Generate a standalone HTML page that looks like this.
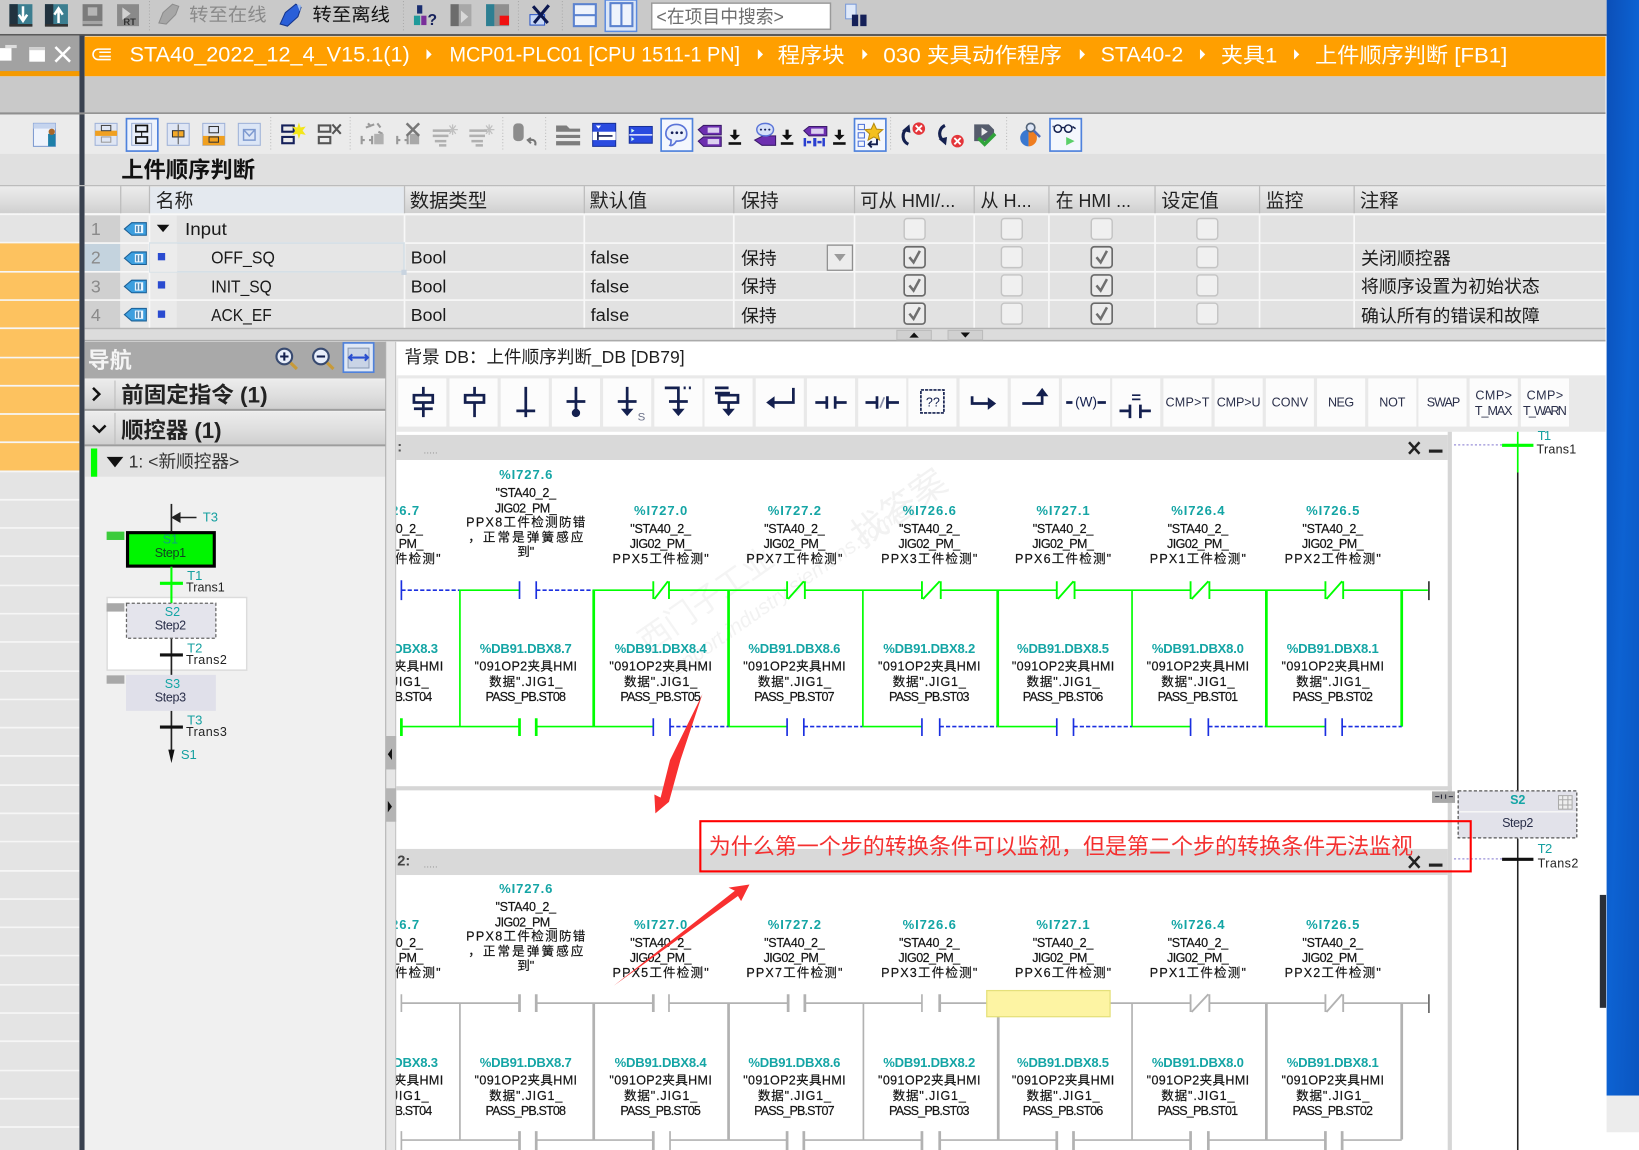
<!DOCTYPE html>
<html lang="zh"><head><meta charset="utf-8"><title>STA40</title>
<style>
html,body{margin:0;padding:0;background:#fff;width:1639px;height:1150px;overflow:hidden}
svg{display:block;filter:blur(.35px)}
text{font-family:"Liberation Sans","Noto Sans CJK SC",sans-serif;fill:#1a1a1a}
.o{fill:#fff;font-size:20px}
.h{font-size:18px;fill:#222}
.t{font-size:17.5px;fill:#222}
.a{font-size:12.5px;font-weight:bold;fill:#14a5a5;text-anchor:middle}
.b{font-size:12px;fill:#151515;text-anchor:middle;stroke:#151515;stroke-width:.2}
.q{font-size:12.5px;fill:#16a0a0}
.s{font-size:12px;fill:#222}
.m{font-size:12px;fill:#2a2f4a;text-anchor:middle}
.i path,.i line{fill:none;stroke:#14204f;stroke-width:2.6}
.i path.f{fill:#14204f;stroke:none}
.n line{stroke:#0f0;stroke-width:1.6}
.n .k{stroke-width:2.6}
.d{stroke:#1a2fe0!important;stroke-dasharray:4 2;stroke-width:1.6}
.u{stroke:#1a2fe0!important}
.g line{stroke:#b2b2b2;stroke-width:1.6}
.g .k{stroke-width:2.6}
</style></head><body>
<svg width="1639" height="1150" viewBox="0 0 1568 1100" preserveAspectRatio="none" xmlns="http://www.w3.org/2000/svg">
<defs>
<linearGradient id="hd" x1="0" y1="0" x2="0" y2="1"><stop offset="0" stop-color="#ececec"/><stop offset=".55" stop-color="#dedede"/><stop offset="1" stop-color="#cfcfcf"/></linearGradient>
<linearGradient id="bl" x1="0" y1="0" x2="1" y2="1"><stop offset="0" stop-color="#0b4fb8"/><stop offset=".5" stop-color="#0d62d2"/><stop offset="1" stop-color="#0a55c0"/></linearGradient>
<clipPath id="c1"><rect x="379" y="413" width="1006" height="687"/></clipPath>
<symbol id="cb" width="22" height="22" viewBox="0 0 22 22"><rect x="1" y="1" width="20" height="20" rx="3" fill="#f0f0f0" stroke="#c4c4c4" stroke-width="1.4"/></symbol>
<symbol id="cc" width="22" height="22" viewBox="0 0 22 22"><rect x="1" y="1" width="20" height="20" rx="3" fill="#ececec" stroke="#6a6a6a" stroke-width="1.6"/><path d="M6 11l4 5 6-11" fill="none" stroke="#6f6f6f" stroke-width="2.4"/></symbol>
<symbol id="tg" width="24" height="16" viewBox="0 0 24 16"><path d="M1 8L8 2h14v12H8z" fill="#3d9fdf" stroke="#1b5f95"/><rect x="11" y="4" width="8" height="8" fill="#eaf6ff"/><path d="M13 5v6M16 5v6" stroke="#1b5f95" stroke-width="1.2"/></symbol>
</defs>

<!-- base -->
<rect width="1568" height="1100" fill="#fff"/>
<rect x="1537" width="31" height="1048" fill="url(#bl)"/>
<rect x="1537" y="1048" width="31" height="35" fill="#ececec"/>

<!-- top toolbar -->
<rect width="1537" height="33" fill="#c9c9c9"/>
<rect y="32.5" width="1537" height="2" fill="#5b5b5b"/>
<rect x="9" y="4" width="22" height="21" fill="#3c7e90"/><rect x="9" y="4" width="8" height="21" fill="#22333f"/><path d="M22 6v12M18 14l4 6 4-6" stroke="#fff" stroke-width="2.4" fill="none"/><rect x="9" y="23" width="22" height="2.5" fill="#333"/>
<rect x="43" y="4" width="22" height="21" fill="#3c7e90"/><rect x="43" y="4" width="8" height="21" fill="#22333f"/><path d="M56 22V10M52 14l4-6 4 6" stroke="#fff" stroke-width="2.4" fill="none"/><rect x="43" y="23" width="22" height="2.5" fill="#333"/>
<rect x="79" y="4" width="19" height="21" fill="#7b7b7b"/><rect x="84" y="7" width="9" height="8" fill="#b5b5b5"/><rect x="79" y="20" width="19" height="3" fill="#a5a5a5"/>
<rect x="112" y="4" width="21" height="21" fill="#8a8a8a"/><path d="M117 7l8 6-8 6z" fill="#d0d0d0"/><text x="118" y="24" style="font-size:9px;font-weight:bold;fill:#333">RT</text>
<path d="M152 22l4-10 9-8 6 2-3 8-9 9z" fill="#a6a6a6" stroke="#8c8c8c"/>
<text class="t" x="181" y="20" textLength="74" lengthAdjust="spacingAndGlyphs" style="fill:#8a8a8a">转至在线</text>
<path d="M268 23l5-11 10-8 5 3-3 9-10 9z" fill="#2a5fd8" stroke="#14358c"/><path d="M284 4l4 1-1 6" fill="#9dbdf0"/>
<text class="t" x="299" y="20" textLength="74" lengthAdjust="spacingAndGlyphs" style="fill:#111">转至离线</text>
<rect x="396" y="15" width="6" height="9" fill="#1f9a9a"/><rect x="403" y="15" width="5" height="9" fill="#7a2f9a"/><rect x="399" y="5" width="5" height="8" fill="#1a2e70"/><text x="409" y="24" style="font-size:15px;font-weight:bold;fill:#15205a">?</text>
<rect x="431" y="4" width="8" height="21" fill="#6c6c6c"/><rect x="439" y="4" width="12" height="21" fill="#a8a8a8"/><path d="M441 10l7 6-7 6z" fill="#d8d8d8"/>
<rect x="465" y="4" width="8" height="21" fill="#2d7f92"/><rect x="473" y="4" width="14" height="21" fill="#8f8f8f"/><rect x="478" y="15" width="9" height="9" fill="#f01010"/>
<rect x="507" y="14" width="14" height="10" fill="#c8d8f5" stroke="#2a55c8"/><path d="M510 6l14 16M525 5l-14 17" stroke="#0c1850" stroke-width="3"/>
<rect x="549" y="4" width="21" height="21" fill="#eef3fc" stroke="#5b82cf" stroke-width="2"/><rect x="549" y="13.500" width="21" height="2" fill="#5b82cf"/>
<rect x="579" y="0" width="30" height="30" fill="#dce6f6" stroke="#5a8ae0" stroke-width="1.4"/><rect x="584" y="3" width="21" height="22" fill="#eef3fc" stroke="#5b82cf" stroke-width="2"/><rect x="593.500" y="3" width="2" height="22" fill="#5b82cf"/>
<line x1="143" y1="1" x2="143" y2="31" stroke="#aaa" stroke-dasharray="1 2"/><line x1="386" y1="1" x2="386" y2="31" stroke="#aaa" stroke-dasharray="1 2"/><line x1="496" y1="1" x2="496" y2="31" stroke="#aaa" stroke-dasharray="1 2"/><line x1="538" y1="1" x2="538" y2="31" stroke="#aaa" stroke-dasharray="1 2"/>
<rect x="623.500" y="3" width="171" height="25" fill="#fff" stroke="#9a9a9a" stroke-width="1.4"/>
<text class="t" x="628" y="22" textLength="122" lengthAdjust="spacingAndGlyphs" style="fill:#6e6e6e">&lt;在项目中搜索&gt;</text>
<rect x="809" y="4" width="10" height="14" fill="#dfe9fa" stroke="#7a9ad8"/><rect x="815" y="14" width="6" height="11" fill="#152058"/><rect x="823" y="14" width="6" height="11" fill="#152058"/>

<!-- left column -->
<rect y="34" width="76" height="35" fill="#a2a2a2"/>
<rect y="68" width="76" height="5" fill="#f59a00"/>
<rect y="73" width="76" height="36" fill="#c9c9c9"/>
<rect y="109" width="76" height="38" fill="#ebebeb"/>
<rect y="147" width="76" height="31" fill="#e0e0e0"/>
<rect y="178" width="76" height="26" fill="url(#hd)"/>
<rect y="204" width="76" height="896" fill="#e4e4e4"/>
<rect y="232" width="76" height="218" fill="#fdc25f"/>
<g stroke="#f6f6f6" stroke-width="1.6"><line x2="76" y1="205" y2="205"/><line x2="76" y1="232" y2="232"/><line x2="76" y1="260" y2="260"/><line x2="76" y1="287" y2="287"/><line x2="76" y1="314" y2="314"/><line x2="76" y1="342" y2="342"/><line x2="76" y1="369" y2="369"/><line x2="76" y1="396" y2="396"/><line x2="76" y1="423" y2="423"/><line x2="76" y1="451" y2="451"/><line x2="76" y1="478" y2="478"/><line x2="76" y1="505" y2="505"/><line x2="76" y1="532" y2="532"/><line x2="76" y1="560" y2="560"/><line x2="76" y1="587" y2="587"/><line x2="76" y1="614" y2="614"/><line x2="76" y1="642" y2="642"/><line x2="76" y1="669" y2="669"/><line x2="76" y1="696" y2="696"/><line x2="76" y1="723" y2="723"/><line x2="76" y1="751" y2="751"/><line x2="76" y1="778" y2="778"/><line x2="76" y1="805" y2="805"/><line x2="76" y1="833" y2="833"/><line x2="76" y1="860" y2="860"/><line x2="76" y1="887" y2="887"/><line x2="76" y1="914" y2="914"/><line x2="76" y1="942" y2="942"/><line x2="76" y1="969" y2="969"/><line x2="76" y1="996" y2="996"/><line x2="76" y1="1024" y2="1024"/><line x2="76" y1="1051" y2="1051"/><line x2="76" y1="1078" y2="1078"/></g>
<rect x="0" y="46" width="11" height="12" fill="#fff"/><rect x="5" y="43" width="11" height="3" fill="#ddd"/>
<rect x="28" y="45" width="15" height="14" fill="#fff"/><rect x="28" y="45" width="15" height="3" fill="#cfcfcf"/>
<path d="M53 45l14 14M67 45L53 59" stroke="#fff" stroke-width="2.4"/>
<rect x="32" y="118" width="21" height="22" fill="#eef3fc" stroke="#7d9ad0"/><rect x="32" y="118" width="21" height="5" fill="#c5d4ee"/><rect x="46" y="128" width="7" height="12" fill="#1d7fa8"/><circle cx="49.500" cy="126" r="3" fill="#a8672a"/>
<rect x="76" y="34" width="5" height="1066" fill="#39414f"/>

<!-- orange breadcrumb -->
<rect x="81" y="35" width="1455" height="38" fill="#ff9f00"/>
<path d="M106 47H94a4 4 0 000 10h12M106 50H95M106 54H95" fill="none" stroke="#fff" stroke-width="1.5"/>
<text class="o" x="124" y="59" textLength="268" lengthAdjust="spacingAndGlyphs">STA40_2022_12_4_V15.1(1)</text>
<path d="M408 47l5 5-5 5z" fill="#fff"/>
<text class="o" x="430" y="59" textLength="278" lengthAdjust="spacingAndGlyphs">MCP01-PLC01 [CPU 1511-1 PN]</text>
<path d="M725 47l5 5-5 5z" fill="#fff"/>
<text class="o" x="744" y="60" textLength="64" lengthAdjust="spacingAndGlyphs">程序块</text>
<path d="M825 47l5 5-5 5z" fill="#fff"/>
<text class="o" x="845" y="60" textLength="171" lengthAdjust="spacingAndGlyphs">030 夹具动作程序</text>
<path d="M1033 47l5 5-5 5z" fill="#fff"/>
<text class="o" x="1053" y="59" textLength="79" lengthAdjust="spacingAndGlyphs">STA40-2</text>
<path d="M1148 47l5 5-5 5z" fill="#fff"/>
<text class="o" x="1168" y="60" textLength="54" lengthAdjust="spacingAndGlyphs">夹具1</text>
<path d="M1238 47l5 5-5 5z" fill="#fff"/>
<text class="o" x="1258" y="60" textLength="184" lengthAdjust="spacingAndGlyphs">上件顺序判断 [FB1]</text>

<!-- grey band and editor toolbar -->
<rect x="81" y="73" width="1455" height="35" fill="#c9c9c9"/>
<rect x="0" y="107.500" width="1536" height="2" fill="#8f8f8f"/>
<rect x="81" y="109" width="1455" height="38" fill="#ebebeb"/>
<rect x="81" y="147" width="1455" height="31" fill="#e0e0e0"/>

<rect x="91" y="118" width="21" height="21" fill="#dfe6f4" stroke="#9fb2d8"/><rect x="91" y="125" width="21" height="5" fill="#f0a020"/><rect x="97" y="120" width="9" height="5" fill="none" stroke="#444"/><rect x="97" y="131" width="9" height="5" fill="none" stroke="#999"/>
<rect x="121" y="113.500" width="30" height="31" fill="#eef3fc" stroke="#4f82dc" stroke-width="1.6"/><rect x="126" y="118" width="19" height="21" fill="#e8eef9" stroke="#9fb2d8"/><rect x="130" y="120" width="11" height="6" fill="none" stroke="#111" stroke-width="1.6"/><rect x="130" y="131" width="11" height="6" fill="none" stroke="#111" stroke-width="1.6"/><line x1="135.500" y1="126" x2="135.500" y2="131" stroke="#111"/>
<rect x="160" y="118" width="21" height="21" fill="#dfe6f4" stroke="#9fb2d8"/><rect x="165" y="125" width="11" height="6" fill="#f4a928" stroke="#333"/><line x1="170.500" y1="119" x2="170.500" y2="138" stroke="#555"/>
<rect x="194" y="118" width="21" height="21" fill="#dfe6f4" stroke="#9fb2d8"/><rect x="194" y="130" width="21" height="9" fill="#f0a020"/><rect x="200" y="121" width="9" height="6" fill="none" stroke="#333"/><rect x="200" y="131" width="9" height="5" fill="none" stroke="#333"/>
<rect x="228" y="118" width="21" height="21" fill="#dce6f6" stroke="#9fb2d8"/><path d="M233 124h11v10h-11zM233 124l5.500 6 5.500-6" fill="none" stroke="#7e9ad0" stroke-width="1.4"/>
<line x1="259" y1="112" x2="259" y2="145" stroke="#bdbdbd" stroke-dasharray="1 2"/>
<rect x="270" y="120" width="11" height="6" fill="none" stroke="#15205a" stroke-width="2"/><rect x="270" y="131" width="11" height="6" fill="none" stroke="#15205a" stroke-width="2"/><path d="M286 117l1.500 5 5-1-3 4 3 4-5-1-1.500 5-1.500-5-5 1 3-4-3-4 5 1z" fill="#f3e61a"/>
<rect x="305" y="120" width="11" height="6" fill="none" stroke="#555" stroke-width="2"/><rect x="305" y="131" width="11" height="6" fill="none" stroke="#555" stroke-width="2"/><path d="M318 119l8 9M326 119l-8 9" stroke="#555" stroke-width="2"/>
<line x1="335" y1="112" x2="335" y2="145" stroke="#bdbdbd" stroke-dasharray="1 2"/>
<path d="M346 130v8M356 130v8M346 134h3M353 134h3M350 122l8-3M361 118l3 4M366 128l-4-2M352 118l3 3" stroke="#999" stroke-width="2" fill="none"/><rect x="358" y="128" width="9" height="10" fill="#b0b0b0"/>
<path d="M380 130v8M390 130v8M380 134h3M387 134h3" stroke="#999" stroke-width="2" fill="none"/><rect x="392" y="128" width="9" height="10" fill="#a8a8a8"/><path d="M389 118l12 12M401 118l-12 12" stroke="#777" stroke-width="2.4"/>
<path d="M414 125h17M414 130h15M416 135h11M420 139h7" stroke="#b0b0b0" stroke-width="2.4"/><path d="M433 119v10M428 124h10M430 120l6 8M436 120l-6 8" stroke="#c0c0c0" stroke-width="1.2"/>
<path d="M449 125h17M449 130h15M451 135h11M455 139h7" stroke="#b0b0b0" stroke-width="2.4"/><path d="M468 119v10M463 124h10M465 120l6 8M471 120l-6 8" stroke="#c0c0c0" stroke-width="1.2"/>
<line x1="481" y1="112" x2="481" y2="145" stroke="#bdbdbd" stroke-dasharray="1 2"/>
<rect x="491" y="118" width="10" height="17" rx="4" fill="#8c8c8c"/><path d="M512 139c1-4-1-6-6-5m2-2l-3 2 3 3" fill="none" stroke="#777" stroke-width="2"/>
<line x1="522" y1="112" x2="522" y2="145" stroke="#bdbdbd" stroke-dasharray="1 2"/>
<path d="M532 120h10l3 3h10v3h-23zM532 129h23v3h-23zM532 135h23v4h-23z" fill="#7d7d7d"/>
<rect x="567" y="118" width="22" height="22" fill="#2a4be0" stroke="#173099"/><path d="M570 120h5l-2.500 3z" fill="#fff"/><rect x="567" y="126" width="22" height="8" fill="#fff"/><path d="M572 126v8M572 130h14" stroke="#15205a" stroke-width="1.6"/>
<rect x="602" y="121" width="22" height="16" fill="#2a4be0" stroke="#173099"/><line x1="602" y1="129" x2="624" y2="129" stroke="#eef" stroke-width="1.4"/><path d="M604 123l3 2-3 2zM604 131l3 2-3 2z" fill="#cfe"/>
<rect x="632.500" y="113.500" width="30" height="31" fill="#f4f7fd" stroke="#4f82dc" stroke-width="1.6"/><path d="M637 128c0-6 5-9 10-9s10 3 10 9-5 7-10 7c-1 2-4 5-6 4 1-1 1-3 1-5-3-1-5-3-5-6z" fill="#eaf0fb" stroke="#5a74d8" stroke-width="1.6"/><circle cx="643" cy="127" r="1.300" fill="#15205a"/><circle cx="647.500" cy="127" r="1.300" fill="#15205a"/><circle cx="652" cy="127" r="1.300" fill="#15205a"/>
<path d="M668 124l5-4h17v9h-17zM668 135l5-4h17v9h-17z" fill="#6d2fb0" stroke="#3b1a6a"/><rect x="677" y="122" width="11" height="5" fill="#dcd0f0"/><rect x="677" y="133" width="11" height="5" fill="#dcd0f0"/>
<path d="M703 124v6" stroke="#111" stroke-width="3"/><path d="M698 129h10l-5 5z" fill="#111"/><rect x="697" y="136" width="12" height="2.500" fill="#111"/>
<path d="M722 134l8-4h12v9h-13z" fill="#6d2fb0" stroke="#3b1a6a"/><path d="M724 124c0-4 4-6 8-6s8 2 8 6-4 6-8 6-8-2-8-6z" fill="#d6e0f8" stroke="#5a74d8" stroke-width="1.4"/><circle cx="728" cy="124" r="1" fill="#15205a"/><circle cx="732" cy="124" r="1" fill="#15205a"/><circle cx="736" cy="124" r="1" fill="#15205a"/>
<path d="M753 124v6" stroke="#111" stroke-width="3"/><path d="M748 129h10l-5 5z" fill="#111"/><rect x="747" y="136" width="12" height="2.500" fill="#111"/>
<path d="M769 125l5-4h17v9h-17z" fill="#6d2fb0" stroke="#3b1a6a"/><rect x="776" y="123" width="12" height="5" fill="#dcd0f0"/><path d="M770 132v8M788 132v8M772 136h4M782 136h4" stroke="#2a3fd0" stroke-width="2.400"/><rect x="778" y="132" width="3" height="8" fill="#2a3fd0"/>
<path d="M803 124v6" stroke="#111" stroke-width="3"/><path d="M798 129h10l-5 5z" fill="#111"/><rect x="797" y="136" width="12" height="2.500" fill="#111"/>
<rect x="817.500" y="113.500" width="30" height="31" fill="#f4f7fd" stroke="#4f82dc" stroke-width="1.6"/><path d="M821 119h6v5h-6zM821 127h6v5h-6zM821 135h6v5h-6z" fill="none" stroke="#4a6fd8"/><path d="M836 118l2.500 5.500 6 .5-4.500 4 1.500 6-5.500-3-5.500 3 1.500-6-4.500-4 6-.5z" fill="#f4c020" stroke="#b58a10"/><path d="M839 133v5h-7m2-3l-3 3 3 3" fill="none" stroke="#14204f" stroke-width="1.8"/>
<line x1="852" y1="112" x2="852" y2="145" stroke="#bdbdbd" stroke-dasharray="1 2"/>
<path d="M869 138c-6-3-7-11-1-15" fill="none" stroke="#14204f" stroke-width="3"/><path d="M863 125l7-6 1 8z" fill="#14204f"/><circle cx="879" cy="123" r="6" fill="#e4353a"/><path d="M876 120l6 6M882 120l-6 6" stroke="#fff" stroke-width="1.8"/>
<path d="M904 120c-6 3-7 11-1 15" fill="none" stroke="#14204f" stroke-width="3"/><path d="M898 133l7 6 1-8z" fill="#14204f"/><circle cx="916" cy="135" r="6" fill="#e4353a"/><path d="M913 132l6 6M919 132l-6 6" stroke="#fff" stroke-width="1.8"/>
<path d="M932 119h14l5 5v6l-6 5h-13z" fill="#555c6c"/><path d="M939 122l6 4-6 4z" fill="#eee"/><path d="M936 132l6 6 10-10" fill="none" stroke="#2fa33a" stroke-width="3.4"/>
<line x1="963" y1="112" x2="963" y2="145" stroke="#bdbdbd" stroke-dasharray="1 2"/>
<path d="M984 124a8 8 0 000 16z" fill="#3a78d0"/><path d="M984 124a8 8 0 010 16z" fill="#ef7d20"/><circle cx="986" cy="122" r="4" fill="#dfe8f8" stroke="#55657a" stroke-width="1.6"/><path d="M989 125l6 6" stroke="#4f6bb8" stroke-width="2.400"/>
<rect x="1004.500" y="113.500" width="30" height="31" fill="#f4f7fd" stroke="#4f82dc" stroke-width="1.6"/><circle cx="1012" cy="123" r="3.500" fill="none" stroke="#14204f" stroke-width="1.4"/><circle cx="1022" cy="123" r="3.500" fill="none" stroke="#14204f" stroke-width="1.4"/><path d="M1015 122h4M1008 121h-1M1026 121l3 2" fill="none" stroke="#14204f" stroke-width="1.400"/><path d="M1020 131l8 4-8 4z" fill="#5bd06a"/>

<!-- title -->
<text x="116" y="170" textLength="128" lengthAdjust="spacingAndGlyphs" style="font-size:21px;font-weight:bold;fill:#111">上件顺序判断</text>

<!-- table -->
<rect x="81" y="178" width="1455" height="26" fill="url(#hd)"/>
<rect x="143" y="179" width="244" height="25" fill="#e4e9ef"/>
<rect x="81" y="204" width="1455" height="2" fill="#f8f8f8"/>
<rect x="81" y="206" width="1455" height="108" fill="#e2e2e2"/>
<rect x="143" y="206" width="26" height="108" fill="#eaeaea"/>
<rect x="81" y="206" width="34" height="108" fill="#d0d0d0"/>
<rect x="81" y="233" width="34" height="27" fill="#c4d3de"/>
<rect x="115" y="206" width="28" height="108" fill="#e8e8e8"/>
<g stroke="#f8f8f8" stroke-width="1.6"><line x1="81" x2="1536" y1="232.500" y2="232.500"/><line x1="81" x2="1536" y1="260" y2="260"/><line x1="81" x2="1536" y1="287" y2="287"/><line x1="143" x2="143" y1="206" y2="314"/><line x1="387" x2="387" y1="206" y2="314"/><line x1="559" x2="559" y1="206" y2="314"/><line x1="702" x2="702" y1="206" y2="314"/><line x1="817.500" x2="817.500" y1="206" y2="314"/><line x1="932" x2="932" y1="206" y2="314"/><line x1="1003.500" x2="1003.500" y1="206" y2="314"/><line x1="1105" x2="1105" y1="206" y2="314"/><line x1="1205" x2="1205" y1="206" y2="314"/><line x1="1295.500" x2="1295.500" y1="206" y2="314"/></g>
<g stroke="#bcbcbc" stroke-width="1.2"><line x1="115.500" x2="115.500" y1="178" y2="204"/><line x1="143" x2="143" y1="178" y2="204"/><line x1="387" x2="387" y1="178" y2="204"/><line x1="559" x2="559" y1="178" y2="204"/><line x1="702" x2="702" y1="178" y2="204"/><line x1="817.500" x2="817.500" y1="178" y2="204"/><line x1="932" x2="932" y1="178" y2="204"/><line x1="1003.500" x2="1003.500" y1="178" y2="204"/><line x1="1105" x2="1105" y1="178" y2="204"/><line x1="1205" x2="1205" y1="178" y2="204"/><line x1="1295.500" x2="1295.500" y1="178" y2="204"/><line x1="0" x2="1536" y1="177.500" y2="177.500"/></g>
<rect x="143.500" y="232.500" width="243" height="27.500" fill="#e6e6e6" stroke="#d5dfe6" stroke-width="1.6"/><rect x="143.500" y="233" width="26" height="27" fill="#ececec"/><rect x="384" y="258" width="5" height="5" fill="#c9d4e0"/>

<text class="h" x="149" y="198" textLength="36" lengthAdjust="spacingAndGlyphs">名称</text>
<text class="h" x="392" y="198" textLength="74" lengthAdjust="spacingAndGlyphs">数据类型</text>
<text class="h" x="564" y="198" textLength="55" lengthAdjust="spacingAndGlyphs">默认值</text>
<text class="h" x="709" y="198" textLength="36" lengthAdjust="spacingAndGlyphs">保持</text>
<text class="h" x="823" y="198" textLength="91" lengthAdjust="spacingAndGlyphs">可从 HMI/...</text>
<text class="h" x="938" y="198" textLength="49" lengthAdjust="spacingAndGlyphs">从 H...</text>
<text class="h" x="1010" y="198" textLength="72" lengthAdjust="spacingAndGlyphs">在 HMI ...</text>
<text class="h" x="1111" y="198" textLength="55" lengthAdjust="spacingAndGlyphs">设定值</text>
<text class="h" x="1211" y="198" textLength="36" lengthAdjust="spacingAndGlyphs">监控</text>
<text class="h" x="1301" y="198" textLength="37" lengthAdjust="spacingAndGlyphs">注释</text>

<g style="font-size:17px">
<text x="87" y="225" style="font-size:17px;fill:#8a8a8a">1</text>
<text x="87" y="252" style="font-size:17px;fill:#8a8a8a">2</text>
<text x="87" y="280" style="font-size:17px;fill:#8a8a8a">3</text>
<text x="87" y="307" style="font-size:17px;fill:#8a8a8a">4</text>
<text x="177" y="225" textLength="40" lengthAdjust="spacingAndGlyphs" style="font-size:17px">Input</text>
<text x="202" y="252" textLength="61" lengthAdjust="spacingAndGlyphs" style="font-size:17px">OFF_SQ</text>
<text x="202" y="280" textLength="58" lengthAdjust="spacingAndGlyphs" style="font-size:17px">INIT_SQ</text>
<text x="202" y="307" textLength="58" lengthAdjust="spacingAndGlyphs" style="font-size:17px">ACK_EF</text>
<text x="393" y="252" textLength="34" lengthAdjust="spacingAndGlyphs" style="font-size:17px">Bool</text>
<text x="393" y="280" textLength="34" lengthAdjust="spacingAndGlyphs" style="font-size:17px">Bool</text>
<text x="393" y="307" textLength="34" lengthAdjust="spacingAndGlyphs" style="font-size:17px">Bool</text>
<text x="565" y="252" textLength="37" lengthAdjust="spacingAndGlyphs" style="font-size:17px">false</text>
<text x="565" y="280" textLength="37" lengthAdjust="spacingAndGlyphs" style="font-size:17px">false</text>
<text x="565" y="307" textLength="37" lengthAdjust="spacingAndGlyphs" style="font-size:17px">false</text>
<text x="709" y="253" textLength="34" lengthAdjust="spacingAndGlyphs" style="font-size:17px">保持</text>
<text x="709" y="280" textLength="34" lengthAdjust="spacingAndGlyphs" style="font-size:17px">保持</text>
<text x="709" y="308" textLength="34" lengthAdjust="spacingAndGlyphs" style="font-size:17px">保持</text>
<text x="1302" y="253" textLength="86" lengthAdjust="spacingAndGlyphs" style="font-size:17px">关闭顺控器</text>
<text x="1302" y="280" textLength="171" lengthAdjust="spacingAndGlyphs" style="font-size:17px">将顺序设置为初始状态</text>
<text x="1302" y="308" textLength="171" lengthAdjust="spacingAndGlyphs" style="font-size:17px">确认所有的错误和故障</text>
</g>
<use href="#tg" x="118" y="211"/><use href="#tg" x="118" y="239"/><use href="#tg" x="118" y="266"/><use href="#tg" x="118" y="293"/>
<path d="M150 215h12l-6 7z" fill="#111"/>
<rect x="151" y="242" width="7" height="7" fill="#2a4bd0"/><rect x="151" y="269" width="7" height="7" fill="#2a4bd0"/><rect x="151" y="297" width="7" height="7" fill="#2a4bd0"/>
<rect x="791.500" y="234.500" width="24" height="24" fill="#ececec" stroke="#8f8f8f" stroke-width="1.2"/><path d="M798 243h11l-5.500 7z" fill="#9a9a9a"/>
<use href="#cb" x="864" y="208"/><use href="#cb" x="957" y="208"/><use href="#cb" x="1043" y="208"/><use href="#cb" x="1144" y="208"/>
<use href="#cc" x="864" y="235"/><use href="#cb" x="957" y="235"/><use href="#cc" x="1043" y="235"/><use href="#cb" x="1144" y="235"/>
<use href="#cc" x="864" y="262"/><use href="#cb" x="957" y="262"/><use href="#cc" x="1043" y="262"/><use href="#cb" x="1144" y="262"/>
<use href="#cc" x="864" y="289"/><use href="#cb" x="957" y="289"/><use href="#cc" x="1043" y="289"/><use href="#cb" x="1144" y="289"/>
<rect x="81" y="314" width="1455" height="11" fill="#dcdcdc"/><rect x="81" y="313.500" width="1455" height="1.400" fill="#b5b5b5"/><rect x="81" y="325" width="1455" height="1.600" fill="#aaa"/>
<rect x="858" y="316" width="33" height="9" fill="#d0d0d0" stroke="#bbb"/><rect x="907" y="316" width="33" height="9" fill="#d0d0d0" stroke="#bbb"/>
<path d="M870 323l4.500-5 4.500 5z" fill="#111"/><path d="M919 318l4.500 5 4.500-5z" fill="#111"/>

<!-- navigation panel -->
<rect x="81" y="327" width="288" height="773" fill="#f0f0f0"/>
<rect x="81" y="327" width="288" height="35" fill="#a9a9a9"/>
<text x="84" y="352" textLength="42" lengthAdjust="spacingAndGlyphs" style="font-size:21px;fill:#f4f4f4;font-weight:bold">导航</text>
<circle cx="272" cy="341" r="7.500" fill="#e8eefa" stroke="#384a70" stroke-width="2"/><path d="M268 341h8M272 337v8" stroke="#14204f" stroke-width="2"/><path d="M278 347l6 6" stroke="#c79a3a" stroke-width="3"/>
<circle cx="307" cy="341" r="7.500" fill="#e8eefa" stroke="#384a70" stroke-width="2"/><path d="M303 341h8" stroke="#14204f" stroke-width="2"/><path d="M313 347l6 6" stroke="#c79a3a" stroke-width="3"/>
<rect x="328.500" y="328" width="29" height="28" fill="#dfe8f6" stroke="#4f82dc" stroke-width="1.6"/><rect x="333" y="333" width="20" height="19" fill="#c9d4e6" stroke="#8a9ab5"/><path d="M334 342h18M337 339l-3 3 3 3M349 339l3 3-3 3" fill="none" stroke="#2a4fd0" stroke-width="2"/>
<rect x="81" y="363" width="288" height="28" fill="url(#hd)"/><rect x="81" y="391" width="288" height="2" fill="#9d9d9d"/>
<rect x="81" y="394" width="288" height="31" fill="url(#hd)"/><rect x="81" y="425" width="288" height="2" fill="#9d9d9d"/>
<line x1="110" y1="364" x2="110" y2="391" stroke="#bbb"/><line x1="110" y1="395" x2="110" y2="425" stroke="#bbb"/>
<path d="M89 371l6 6-6 6" fill="none" stroke="#111" stroke-width="2.400"/>
<path d="M89 407l6 6 6-6" fill="none" stroke="#111" stroke-width="2.400"/>
<text x="116" y="385" textLength="140" lengthAdjust="spacingAndGlyphs" style="font-size:21px;font-weight:bold;fill:#222">前固定指令 (1)</text>
<text x="116" y="419" textLength="96" lengthAdjust="spacingAndGlyphs" style="font-size:21px;font-weight:bold;fill:#222">顺控器 (1)</text>
<rect x="81" y="427" width="288" height="29" fill="#e2e2e2"/>
<rect x="87" y="429" width="6" height="27" fill="#0f0"/>
<path d="M102 437h16l-8 10z" fill="#111"/>
<text x="123" y="447" textLength="106" lengthAdjust="spacingAndGlyphs" style="font-size:17px;fill:#333">1: &lt;新顺控器&gt;</text>

<!-- SFC in nav -->
<rect x="102.500" y="571.500" width="133.500" height="69.500" fill="#fff" stroke="#dcdcdc" stroke-width="1.4"/>
<line x1="164" y1="482" x2="164" y2="508" stroke="#222" stroke-width="1.6"/>
<path d="M188 495h-18M172 491l-7 4 7 4z" fill="#222" stroke="#222" stroke-width="1.4"/>
<text class="q" x="194" y="499">T3</text>
<rect x="122" y="509.500" width="83" height="32" fill="#00f500" stroke="#000" stroke-width="3"/>
<rect x="102" y="508.500" width="17" height="8" fill="#3ccb3c"/>
<text class="m" x="163" y="520" style="fill:#0da47a">S1</text><text class="m" x="163" y="533" textLength="30" style="fill:#142">Step1</text>
<line x1="164" y1="542" x2="164" y2="577" stroke="#0f0" stroke-width="2"/>
<line x1="153" y1="558" x2="175" y2="558" stroke="#0f0" stroke-width="3"/>
<text class="q" x="179" y="555">T1</text><text class="s" x="178" y="566" textLength="37">Trans1</text>
<rect x="121" y="577" width="85.500" height="33.500" fill="#e4e4ec" stroke="#666" stroke-width="1.2" stroke-dasharray="3 2"/>
<rect x="102" y="577" width="17" height="8" fill="#a8a8a8"/>
<text class="m" x="165" y="589" style="fill:#14a5a5">S2</text><text class="m" x="163" y="602" textLength="30">Step2</text>
<line x1="164" y1="611" x2="164" y2="646" stroke="#222" stroke-width="1.6"/>
<line x1="153" y1="626.500" x2="175" y2="626.500" stroke="#111" stroke-width="3"/>
<text class="q" x="179" y="624">T2</text><text class="s" x="178" y="635" textLength="39">Trans2</text>
<rect x="120.500" y="645.500" width="86" height="34.500" fill="#e0e0ea"/>
<rect x="102" y="646" width="17" height="8" fill="#a8a8a8"/>
<text class="m" x="165" y="658" style="fill:#14a5a5">S3</text><text class="m" x="163" y="671" textLength="30">Step3</text>
<line x1="164" y1="680" x2="164" y2="722" stroke="#222" stroke-width="1.6"/>
<line x1="153" y1="695.500" x2="175" y2="695.500" stroke="#111" stroke-width="3"/>
<text class="q" x="179" y="693">T3</text><text class="s" x="178" y="704" textLength="39">Trans3</text>
<path d="M161 717h6l-3 13z" fill="#111"/>
<text class="q" x="173" y="726">S1</text>

<!-- splitter -->
<rect x="369" y="327" width="10" height="773" fill="#e6e6e6"/>
<line x1="369" x2="369" y1="327" y2="1100" stroke="#b0b0b0"/><line x1="378.500" x2="378.500" y1="327" y2="1100" stroke="#c4c4c4"/>
<rect x="369" y="704" width="10" height="32" fill="#b4b4b4"/><rect x="369" y="754" width="10" height="32" fill="#b4b4b4"/>
<path d="M375 716v11l-4-5.500z" fill="#111"/><path d="M371 766v11l4-5.500z" fill="#111"/>

<!-- editor -->
<text x="387" y="347" textLength="268" lengthAdjust="spacingAndGlyphs" style="font-size:17px;fill:#1f1f1f">背景 DB：上件顺序判断_DB [DB79]</text>
<rect x="379" y="359" width="1157" height="54" fill="#e9e9e9"/>
<g fill="#fcfcfc">
<rect x="381" y="362" width="46" height="46"/><rect x="430" y="362" width="46" height="46"/><rect x="479" y="362" width="46" height="46"/><rect x="528" y="362" width="46" height="46"/><rect x="577" y="362" width="46" height="46"/><rect x="626" y="362" width="46" height="46"/><rect x="674" y="362" width="46" height="46"/><rect x="723" y="362" width="46" height="46"/><rect x="772" y="362" width="46" height="46"/><rect x="821" y="362" width="46" height="46"/><rect x="869" y="362" width="46" height="46"/><rect x="918" y="362" width="46" height="46"/><rect x="967" y="362" width="46" height="46"/><rect x="1016" y="362" width="46" height="46"/><rect x="1064" y="362" width="46" height="46"/><rect x="1113" y="362" width="46" height="46"/><rect x="1162" y="362" width="46" height="46"/><rect x="1211" y="362" width="46" height="46"/><rect x="1260" y="362" width="46" height="46"/><rect x="1309" y="362" width="46" height="46"/><rect x="1357" y="362" width="46" height="46"/><rect x="1406" y="362" width="46" height="46"/><rect x="1455" y="362" width="46" height="46"/>
</g>
<g class="i">
<path d="M405 370v8M396 378h18v7h-18zM396 391h18M405 385v14"/>
<path d="M454 370v8M445 378h18v7h-18zM454 385v14"/>
<path d="M503 370v29M494 393h18"/>
<path d="M551 370v26M542 384h18"/><circle cx="551" cy="395" r="4" fill="#14204f"/>
<path d="M600 370v24M591 384h18"/><path class="f" d="M594 391h12l-6 7z"/>
<path d="M636 371h13v23M640 384h18"/><path class="f" d="M643 391h12l-6 7z"/><path d="M654 371h2M659 371h2"/>
<path d="M684 371h13M684 376h13v2M688 378h18v7h-18zM697 385v8"/><path class="f" d="M691 391h12l-6 7z"/>
<path d="M759 371v14h-20"/><path class="f" d="M741 379l-8 6 8 6z"/>
<path d="M780 385h11M791 379v12M799 379v12M799 385h11"/>
<path d="M828 385h11M839 379v12M849 379v12M849 385h11"/><path d="M842 390l4-10" style="stroke:#8a8fa8;stroke-width:1.6"/>
<path d="M881 373h22v22h-22z" style="stroke-width:1.6;stroke-dasharray:3 1"/>
<path d="M930 379v7h17"/><path class="f" d="M945 380l8 6-8 6z"/>
<path d="M978 386h19v-9"/><path class="f" d="M991 379l6-8 6 8z"/>
<path d="M1020 385h6M1050 385h8"/>
<path d="M1071 393h10M1081 387v13M1091 387v13M1091 393h10"/><path d="M1083 378h8M1083 382h8" style="stroke-width:1.600"/>
</g>
<text x="892.500" y="389" text-anchor="middle" style="font-size:12px;fill:#14204f">??</text>
<text x="1039" y="389" text-anchor="middle" style="font-size:13px;fill:#14204f">(W)</text>
<text x="610" y="402" style="font-size:11px;fill:#6a7088">S</text>
<text class="m" x="1136" y="389" textLength="42">CMP&gt;T</text>
<text class="m" x="1185" y="389" textLength="42">CMP&gt;U</text>
<text class="m" x="1234" y="389" textLength="35">CONV</text>
<text class="m" x="1283" y="389" textLength="25">NEG</text>
<text class="m" x="1332" y="389" textLength="25">NOT</text>
<text class="m" x="1381" y="389" textLength="32">SWAP</text>
<text class="m" x="1429" y="382" textLength="35">CMP&gt;</text><text class="m" x="1429" y="397" textLength="36">T_MAX</text>
<text class="m" x="1478" y="382" textLength="35">CMP&gt;</text><text class="m" x="1478" y="397" textLength="42">T_WARN</text>

<!-- network frames -->
<rect x="379" y="416" width="1006" height="24" fill="#d9d9d9"/>
<rect x="379" y="812" width="1006" height="25" fill="#d9d9d9"/>
<rect x="379" y="752" width="1010" height="4" fill="#d6d6d6"/>
<rect x="1385" y="413" width="4" height="687" fill="#d6d6d6"/>
<text x="380" y="432" style="font-size:14px;fill:#555;font-weight:bold">:</text>
<text x="380" y="828" style="font-size:14px;fill:#444;font-weight:bold">2:</text>
<text x="405" y="434" style="font-size:10px;fill:#999">.....</text>
<text x="405" y="830" style="font-size:10px;fill:#999">.....</text>
<path d="M1348 423l10 11M1358 423l-10 11" stroke="#222" stroke-width="2.400"/><rect x="1367" y="430" width="13" height="3" fill="#222"/>
<path d="M1348 819l10 11M1358 819l-10 11" stroke="#222" stroke-width="2.400"/><rect x="1367" y="826" width="13" height="3" fill="#222"/>

<!-- watermark -->
<g style="opacity:.45">
<text transform="translate(620 625) rotate(-35)" style="font-size:30px;fill:#e8e8e8">西门子工业</text>
<text transform="translate(640 652) rotate(-35)" style="font-size:20px;font-style:italic;fill:#e4e4e4">support.industry.siemens.com/cs</text>
<text transform="translate(825 525) rotate(-35)" style="font-size:34px;fill:#e4e4e4">找答案</text>
</g>

<g clip-path="url(#c1)">
<!-- network 1 ladder -->
<g class="n">
<line class="u" x1="384" x2="384" y1="555" y2="574"/><line class="d" x1="384" x2="440" y1="564.500" y2="564.500"/>
<line x1="440" x2="497" y1="564.500" y2="564.500"/><line class="u" x1="497" x2="497" y1="556" y2="573"/><line class="u" x1="513" x2="513" y1="556" y2="573"/><line class="d" x1="513" x2="568" y1="564.500" y2="564.500"/>
<line x1="568" x2="625" y1="564.500" y2="564.500"/><line x1="640" x2="753" y1="564.500" y2="564.500"/><line x1="770" x2="882" y1="564.500" y2="564.500"/><line x1="900" x2="1011" y1="564.500" y2="564.500"/><line x1="1028" x2="1139" y1="564.500" y2="564.500"/><line x1="1157" x2="1268" y1="564.500" y2="564.500"/><line x1="1285" x2="1366" y1="564.500" y2="564.500"/>
<path d="M625 556v17M640 556v17M626 573l13-17M753 556v17M770 556v17M754 573l15-17M882 556v17M900 556v17M883 573l16-17M1011 556v17M1028 556v17M1012 573l15-17M1139 556v17M1157 556v17M1140 573l16-17M1268 556v17M1285 556v17M1269 573l15-17" fill="none" stroke="#0f0" stroke-width="1.800"/>
<line x1="1367" x2="1367" y1="556" y2="574" style="stroke:#333"/>
<line x1="440" x2="440" y1="564" y2="695"/><line class="k" x1="568" x2="568" y1="564" y2="695"/><line class="k" x1="697" x2="697" y1="564" y2="695"/><line x1="825.500" x2="825.500" y1="564" y2="695"/><line class="k" x1="954.500" x2="954.500" y1="564" y2="695"/><line x1="1083" x2="1083" y1="564" y2="695"/><line class="k" x1="1211.500" x2="1211.500" y1="564" y2="695"/><line class="k" x1="1341" x2="1341" y1="564" y2="695"/>
<line class="k" x1="384" x2="384" y1="687" y2="704"/><line x1="384" x2="497" y1="695" y2="695"/><line class="k" x1="497" x2="497" y1="687" y2="704"/><line class="k" x1="513" x2="513" y1="687" y2="704"/><line x1="513" x2="625" y1="695" y2="695"/>
<line class="u" x1="625" x2="625" y1="687" y2="704"/><line class="u" x1="641" x2="641" y1="687" y2="704"/><line class="d" x1="641" x2="697" y1="695" y2="695"/><line x1="697" x2="753" y1="695" y2="695"/>
<line class="u" x1="753" x2="753" y1="687" y2="704"/><line class="u" x1="769" x2="769" y1="687" y2="704"/><line class="d" x1="769" x2="825" y1="695" y2="695"/><line x1="825" x2="882" y1="695" y2="695"/>
<line class="u" x1="882" x2="882" y1="687" y2="704"/><line class="u" x1="899" x2="899" y1="687" y2="704"/><line class="d" x1="899" x2="954" y1="695" y2="695"/><line x1="954" x2="1011" y1="695" y2="695"/>
<line class="u" x1="1011" x2="1011" y1="687" y2="704"/><line class="u" x1="1027" x2="1027" y1="687" y2="704"/><line class="d" x1="1027" x2="1083" y1="695" y2="695"/><line x1="1083" x2="1139" y1="695" y2="695"/>
<line class="u" x1="1139" x2="1139" y1="687" y2="704"/><line class="u" x1="1156" x2="1156" y1="687" y2="704"/><line class="d" x1="1156" x2="1211" y1="695" y2="695"/><line x1="1211" x2="1268" y1="695" y2="695"/>
<line class="u" x1="1268" x2="1268" y1="687" y2="704"/><line class="u" x1="1284" x2="1284" y1="687" y2="704"/><line class="d" x1="1284" x2="1341" y1="695" y2="695"/>
</g>
<!-- network 1 labels -->
<text class="a" x="375.500" y="492.500" textLength="51">%I726.7</text><text class="b" x="375.500" y="510" textLength="58">"STA40_2_</text><text class="b" x="375.500" y="524" textLength="59">JIG02_PM_</text><text class="b" x="375.500" y="538.500" textLength="92">PPX4工件检测"</text>
<text class="a" x="503" y="458" textLength="51">%I727.6</text><text class="b" x="503" y="475.500" textLength="58">"STA40_2_</text><text class="b" x="503" y="490" textLength="59">JIG02_PM_</text><text class="b" x="503" y="503.500" textLength="114">PPX8工件检测防错</text><text class="b" x="503" y="518" textLength="110">，正常是弹簧感应</text><text class="b" x="503" y="532">到"</text>
<text class="a" x="632" y="492.500" textLength="51">%I727.0</text><text class="b" x="632" y="510" textLength="58">"STA40_2_</text><text class="b" x="632" y="524" textLength="59">JIG02_PM_</text><text class="b" x="632" y="538.500" textLength="92">PPX5工件检测"</text>
<text class="a" x="760" y="492.500" textLength="51">%I727.2</text><text class="b" x="760" y="510" textLength="58">"STA40_2_</text><text class="b" x="760" y="524" textLength="59">JIG02_PM_</text><text class="b" x="760" y="538.500" textLength="92">PPX7工件检测"</text>
<text class="a" x="889" y="492.500" textLength="51">%I726.6</text><text class="b" x="889" y="510" textLength="58">"STA40_2_</text><text class="b" x="889" y="524" textLength="59">JIG02_PM_</text><text class="b" x="889" y="538.500" textLength="92">PPX3工件检测"</text>
<text class="a" x="1017" y="492.500" textLength="51">%I727.1</text><text class="b" x="1017" y="510" textLength="58">"STA40_2_</text><text class="b" x="1017" y="524" textLength="59">JIG02_PM_</text><text class="b" x="1017" y="538.500" textLength="92">PPX6工件检测"</text>
<text class="a" x="1146" y="492.500" textLength="51">%I726.4</text><text class="b" x="1146" y="510" textLength="58">"STA40_2_</text><text class="b" x="1146" y="524" textLength="59">JIG02_PM_</text><text class="b" x="1146" y="538.500" textLength="92">PPX1工件检测"</text>
<text class="a" x="1275" y="492.500" textLength="51">%I726.5</text><text class="b" x="1275" y="510" textLength="58">"STA40_2_</text><text class="b" x="1275" y="524" textLength="59">JIG02_PM_</text><text class="b" x="1275" y="538.500" textLength="92">PPX2工件检测"</text>

<text class="a" x="375" y="624.500" textLength="88">%DB91.DBX8.3</text><text class="b" x="375" y="641.500" textLength="98">"091OP2夹具HMI</text><text class="b" x="375" y="656" textLength="70">数据".JIG1_</text><text class="b" x="375" y="670.500" textLength="77">PASS_PB.ST04</text>
<text class="a" x="503" y="624.500" textLength="88">%DB91.DBX8.7</text><text class="b" x="503" y="641.500" textLength="98">"091OP2夹具HMI</text><text class="b" x="503" y="656" textLength="70">数据".JIG1_</text><text class="b" x="503" y="670.500" textLength="77">PASS_PB.ST08</text>
<text class="a" x="632" y="624.500" textLength="88">%DB91.DBX8.4</text><text class="b" x="632" y="641.500" textLength="98">"091OP2夹具HMI</text><text class="b" x="632" y="656" textLength="70">数据".JIG1_</text><text class="b" x="632" y="670.500" textLength="77">PASS_PB.ST05</text>
<text class="a" x="760" y="624.500" textLength="88">%DB91.DBX8.6</text><text class="b" x="760" y="641.500" textLength="98">"091OP2夹具HMI</text><text class="b" x="760" y="656" textLength="70">数据".JIG1_</text><text class="b" x="760" y="670.500" textLength="77">PASS_PB.ST07</text>
<text class="a" x="889" y="624.500" textLength="88">%DB91.DBX8.2</text><text class="b" x="889" y="641.500" textLength="98">"091OP2夹具HMI</text><text class="b" x="889" y="656" textLength="70">数据".JIG1_</text><text class="b" x="889" y="670.500" textLength="77">PASS_PB.ST03</text>
<text class="a" x="1017" y="624.500" textLength="88">%DB91.DBX8.5</text><text class="b" x="1017" y="641.500" textLength="98">"091OP2夹具HMI</text><text class="b" x="1017" y="656" textLength="70">数据".JIG1_</text><text class="b" x="1017" y="670.500" textLength="77">PASS_PB.ST06</text>
<text class="a" x="1146" y="624.500" textLength="88">%DB91.DBX8.0</text><text class="b" x="1146" y="641.500" textLength="98">"091OP2夹具HMI</text><text class="b" x="1146" y="656" textLength="70">数据".JIG1_</text><text class="b" x="1146" y="670.500" textLength="77">PASS_PB.ST01</text>
<text class="a" x="1275" y="624.500" textLength="88">%DB91.DBX8.1</text><text class="b" x="1275" y="641.500" textLength="98">"091OP2夹具HMI</text><text class="b" x="1275" y="656" textLength="70">数据".JIG1_</text><text class="b" x="1275" y="670.500" textLength="77">PASS_PB.ST02</text>

<!-- network 2 ladder -->
<g class="g">
<line x1="384" x2="384" y1="951" y2="968"/><line x1="384" x2="497" y1="959.500" y2="959.500"/><line class="k" x1="497" x2="497" y1="951" y2="968"/><line class="k" x1="513" x2="513" y1="951" y2="968"/><line x1="513" x2="625" y1="959.500" y2="959.500"/><line class="k" x1="625" x2="625" y1="951" y2="968"/><line x1="640" x2="640" y1="951" y2="968"/><line x1="640" x2="754" y1="959.500" y2="959.500"/><line class="k" x1="754" x2="754" y1="951" y2="968"/><line class="k" x1="770" x2="770" y1="951" y2="968"/><line x1="770" x2="882" y1="959.500" y2="959.500"/><line x1="882" x2="882" y1="951" y2="968"/><line class="k" x1="899" x2="899" y1="951" y2="968"/><line x1="899" x2="944" y1="959.500" y2="959.500"/><line x1="1062" x2="1139" y1="959.500" y2="959.500"/><line x1="1157" x2="1268" y1="959.500" y2="959.500"/><line x1="1285" x2="1366" y1="959.500" y2="959.500"/>
<path d="M1139 951v17M1157 951v17M1140 968l16-17M1268 951v17M1285 951v17M1269 968l15-17" fill="none" stroke="#b2b2b2" stroke-width="1.800"/>
<line x1="1367" x2="1367" y1="951" y2="969" style="stroke:#666"/>
<line x1="440" x2="440" y1="959" y2="1090"/><line class="k" x1="568" x2="568" y1="959" y2="1090"/><line class="k" x1="697" x2="697" y1="959" y2="1090"/><line x1="826" x2="826" y1="959" y2="1090"/><line class="k" x1="955" x2="955" y1="972" y2="1090"/><line x1="1083" x2="1083" y1="959" y2="1090"/><line class="k" x1="1211.500" x2="1211.500" y1="959" y2="1090"/><line class="k" x1="1341" x2="1341" y1="959" y2="1090"/>
<line x1="384" x2="384" y1="1082" y2="1100"/><line x1="384" x2="497" y1="1090.500" y2="1090.500"/><line class="k" x1="497" x2="497" y1="1082" y2="1100"/><line class="k" x1="513" x2="513" y1="1082" y2="1100"/><line x1="513" x2="625" y1="1090.500" y2="1090.500"/><line class="k" x1="625" x2="625" y1="1082" y2="1100"/><line x1="641" x2="641" y1="1082" y2="1100"/><line x1="641" x2="753" y1="1090.500" y2="1090.500"/><line class="k" x1="753" x2="753" y1="1082" y2="1100"/><line class="k" x1="769" x2="769" y1="1082" y2="1100"/><line x1="769" x2="882" y1="1090.500" y2="1090.500"/><line class="k" x1="882" x2="882" y1="1082" y2="1100"/><line class="k" x1="899" x2="899" y1="1082" y2="1100"/><line x1="899" x2="1011" y1="1090.500" y2="1090.500"/><line class="k" x1="1011" x2="1011" y1="1082" y2="1100"/><line class="k" x1="1027" x2="1027" y1="1082" y2="1100"/><line x1="1027" x2="1139" y1="1090.500" y2="1090.500"/><line class="k" x1="1139" x2="1139" y1="1082" y2="1100"/><line class="k" x1="1156" x2="1156" y1="1082" y2="1100"/><line x1="1156" x2="1268" y1="1090.500" y2="1090.500"/><line class="k" x1="1268" x2="1268" y1="1082" y2="1100"/><line class="k" x1="1284" x2="1284" y1="1082" y2="1100"/><line x1="1284" x2="1341" y1="1090.500" y2="1090.500"/>
</g>
<rect x="944" y="947.500" width="118" height="25" fill="#fdf4a3" stroke="#e5e07a" stroke-width="1.200"/>
<!-- network 2 labels -->
<text class="a" x="375.500" y="888.500" textLength="51">%I726.7</text><text class="b" x="375.500" y="906" textLength="58">"STA40_2_</text><text class="b" x="375.500" y="920" textLength="59">JIG02_PM_</text><text class="b" x="375.500" y="934.500" textLength="92">PPX4工件检测"</text>
<text class="a" x="503" y="854" textLength="51">%I727.6</text><text class="b" x="503" y="871.500" textLength="58">"STA40_2_</text><text class="b" x="503" y="886" textLength="59">JIG02_PM_</text><text class="b" x="503" y="899.500" textLength="114">PPX8工件检测防错</text><text class="b" x="503" y="914" textLength="110">，正常是弹簧感应</text><text class="b" x="503" y="928">到"</text>
<text class="a" x="632" y="888.500" textLength="51">%I727.0</text><text class="b" x="632" y="906" textLength="58">"STA40_2_</text><text class="b" x="632" y="920" textLength="59">JIG02_PM_</text><text class="b" x="632" y="934.500" textLength="92">PPX5工件检测"</text>
<text class="a" x="760" y="888.500" textLength="51">%I727.2</text><text class="b" x="760" y="906" textLength="58">"STA40_2_</text><text class="b" x="760" y="920" textLength="59">JIG02_PM_</text><text class="b" x="760" y="934.500" textLength="92">PPX7工件检测"</text>
<text class="a" x="889" y="888.500" textLength="51">%I726.6</text><text class="b" x="889" y="906" textLength="58">"STA40_2_</text><text class="b" x="889" y="920" textLength="59">JIG02_PM_</text><text class="b" x="889" y="934.500" textLength="92">PPX3工件检测"</text>
<text class="a" x="1017" y="888.500" textLength="51">%I727.1</text><text class="b" x="1017" y="906" textLength="58">"STA40_2_</text><text class="b" x="1017" y="920" textLength="59">JIG02_PM_</text><text class="b" x="1017" y="934.500" textLength="92">PPX6工件检测"</text>
<text class="a" x="1146" y="888.500" textLength="51">%I726.4</text><text class="b" x="1146" y="906" textLength="58">"STA40_2_</text><text class="b" x="1146" y="920" textLength="59">JIG02_PM_</text><text class="b" x="1146" y="934.500" textLength="92">PPX1工件检测"</text>
<text class="a" x="1275" y="888.500" textLength="51">%I726.5</text><text class="b" x="1275" y="906" textLength="58">"STA40_2_</text><text class="b" x="1275" y="920" textLength="59">JIG02_PM_</text><text class="b" x="1275" y="934.500" textLength="92">PPX2工件检测"</text>

<text class="a" x="375" y="1020.500" textLength="88">%DB91.DBX8.3</text><text class="b" x="375" y="1037.500" textLength="98">"091OP2夹具HMI</text><text class="b" x="375" y="1052" textLength="70">数据".JIG1_</text><text class="b" x="375" y="1066.500" textLength="77">PASS_PB.ST04</text>
<text class="a" x="503" y="1020.500" textLength="88">%DB91.DBX8.7</text><text class="b" x="503" y="1037.500" textLength="98">"091OP2夹具HMI</text><text class="b" x="503" y="1052" textLength="70">数据".JIG1_</text><text class="b" x="503" y="1066.500" textLength="77">PASS_PB.ST08</text>
<text class="a" x="632" y="1020.500" textLength="88">%DB91.DBX8.4</text><text class="b" x="632" y="1037.500" textLength="98">"091OP2夹具HMI</text><text class="b" x="632" y="1052" textLength="70">数据".JIG1_</text><text class="b" x="632" y="1066.500" textLength="77">PASS_PB.ST05</text>
<text class="a" x="760" y="1020.500" textLength="88">%DB91.DBX8.6</text><text class="b" x="760" y="1037.500" textLength="98">"091OP2夹具HMI</text><text class="b" x="760" y="1052" textLength="70">数据".JIG1_</text><text class="b" x="760" y="1066.500" textLength="77">PASS_PB.ST07</text>
<text class="a" x="889" y="1020.500" textLength="88">%DB91.DBX8.2</text><text class="b" x="889" y="1037.500" textLength="98">"091OP2夹具HMI</text><text class="b" x="889" y="1052" textLength="70">数据".JIG1_</text><text class="b" x="889" y="1066.500" textLength="77">PASS_PB.ST03</text>
<text class="a" x="1017" y="1020.500" textLength="88">%DB91.DBX8.5</text><text class="b" x="1017" y="1037.500" textLength="98">"091OP2夹具HMI</text><text class="b" x="1017" y="1052" textLength="70">数据".JIG1_</text><text class="b" x="1017" y="1066.500" textLength="77">PASS_PB.ST06</text>
<text class="a" x="1146" y="1020.500" textLength="88">%DB91.DBX8.0</text><text class="b" x="1146" y="1037.500" textLength="98">"091OP2夹具HMI</text><text class="b" x="1146" y="1052" textLength="70">数据".JIG1_</text><text class="b" x="1146" y="1066.500" textLength="77">PASS_PB.ST01</text>
<text class="a" x="1275" y="1020.500" textLength="88">%DB91.DBX8.1</text><text class="b" x="1275" y="1037.500" textLength="98">"091OP2夹具HMI</text><text class="b" x="1275" y="1052" textLength="70">数据".JIG1_</text><text class="b" x="1275" y="1066.500" textLength="77">PASS_PB.ST02</text>
</g>

<!-- right SFC pane -->
<line x1="1452" x2="1452" y1="413" y2="452" stroke="#0f0" stroke-width="1.600"/>
<line x1="1452" x2="1452" y1="452" y2="756" stroke="#222" stroke-width="1.500"/>
<line x1="1452" x2="1452" y1="802" y2="1100" stroke="#222" stroke-width="1.500"/>
<line x1="1437" x2="1467" y1="426" y2="426" stroke="#0f0" stroke-width="3"/>
<line x1="1391" x2="1437" y1="425.500" y2="425.500" stroke="#9a90d8" stroke-width="1.200" stroke-dasharray="2 2"/>
<text class="q" x="1471" y="421" textLength="13">T1</text><text class="s" x="1470" y="434" textLength="38">Trans1</text>
<rect x="1370" y="757" width="22" height="11" fill="#a8a8a8"/><path d="M1373 762h4M1379 760v4M1383 760v4M1386 762h4" stroke="#223" stroke-width="1"/>
<rect x="1395" y="756.500" width="113.500" height="45" fill="#e2e2ea" stroke="#555" stroke-width="1.200" stroke-dasharray="3 2"/>
<line x1="1396" x2="1508" y1="776.500" y2="776.500" stroke="#f8f8f8" stroke-width="1.400"/>
<text class="m" x="1452" y="769" style="fill:#14a5a5;font-weight:bold">S2</text><text class="m" x="1452" y="791" textLength="30">Step2</text>
<path d="M1491 761h13v13h-13zM1495 761v13M1500 761v13M1491 765h13M1491 770h13" fill="#eee" stroke="#aaa" stroke-width="1"/>
<line x1="1437" x2="1467" y1="822" y2="822" stroke="#111" stroke-width="3"/>
<line x1="1391" x2="1437" y1="821.500" y2="821.500" stroke="#9a90d8" stroke-width="1.200" stroke-dasharray="2 2"/>
<text class="q" x="1471" y="816" textLength="14">T2</text><text class="s" x="1471" y="830" textLength="39">Trans2</text>
<rect x="1530.500" y="856" width="6" height="108" fill="#2a2f38"/>

<!-- annotations -->
<rect x="670" y="785.500" width="737" height="48" fill="none" stroke="#f00" stroke-width="2"/>
<text x="678" y="817" textLength="674" lengthAdjust="spacingAndGlyphs" style="font-size:21px;fill:#f43030">为什么第一个步的转换条件可以监视，但是第二个步的转换条件无法监视</text>
<path d="M672 664L651 727 640 767 627 778 626 760 632 763 641 727z" fill="#f83030"/>
<path d="M587 943L703 852 697 849 717 846 709 862 706 857z" fill="#f83030"/>
</svg>
</body></html>
